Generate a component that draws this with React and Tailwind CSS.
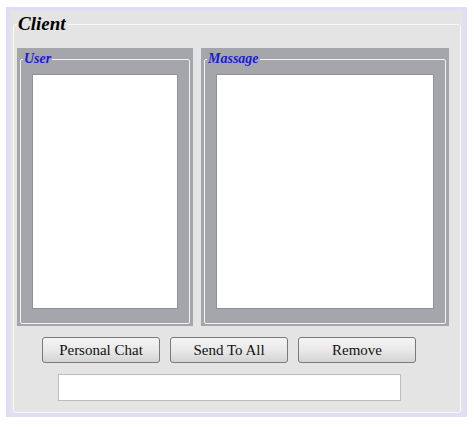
import React from "react";

const BUTTONS = ["Personal Chat", "Send To All", "Remove"];

function Panel({ title, width }) {
  return (
    <div className={`${width} h-[278px] bg-[#a4a6ab] flex flex-col px-[3px] pt-[2px] pb-[2px]`}>
      <fieldset className="flex-1 flex flex-col border border-[#f2f2f4] rounded-[2px] px-[11px] pb-[14px]">
        <legend className="-ml-[9px] px-[1px] text-[14px] leading-[18px] font-bold italic text-[#1a1ad8]">
          {title}
        </legend>
        <div className="flex-1 mt-[6px] bg-white border border-[#8f9196]" />
      </fieldset>
    </div>
  );
}

export default function App() {
  return (
    <div className="w-[474px] h-[429px] bg-white pt-[7px] pl-[6px] [font-family:'Liberation_Serif','Times_New_Roman',serif]">
      <div className="w-[461px] h-[410px] border-[4px] border-[#dfdef5] bg-[#e5e4e4] flex flex-col pt-[1px] pl-[3px] pr-[2px]">
        <fieldset className="flex-1 border border-[#f8f8f8] rounded-[3px] pl-[3px]">
          <legend className="ml-0 px-[1px] text-[19px] leading-[24px] font-bold italic text-black">
            Client
          </legend>
          <div className="flex gap-[8px] mt-[12px]">
            <Panel title="User" width="w-[176px]" />
            <Panel title="Massage" width="w-[248px]" />
          </div>
          <div className="flex gap-[10px] mt-[11px] ml-[25px]">
            {BUTTONS.map((label) => (
              <button
                key={label}
                type="button"
                className="w-[118px] h-[26px] rounded-[3px] border border-[#7a7a7a] bg-gradient-to-b from-[#f4f4f4] via-[#e9e9e9] to-[#d4d4d4] text-[15px] leading-none text-[#111] [font-family:'Liberation_Serif',serif]"
              >
                {label}
              </button>
            ))}
          </div>
          <input
            type="text"
            className="block mt-[11px] ml-[41px] w-[343px] h-[27px] bg-white border border-[#bdbdbd] outline-none"
          />
        </fieldset>
      </div>
    </div>
  );
}
